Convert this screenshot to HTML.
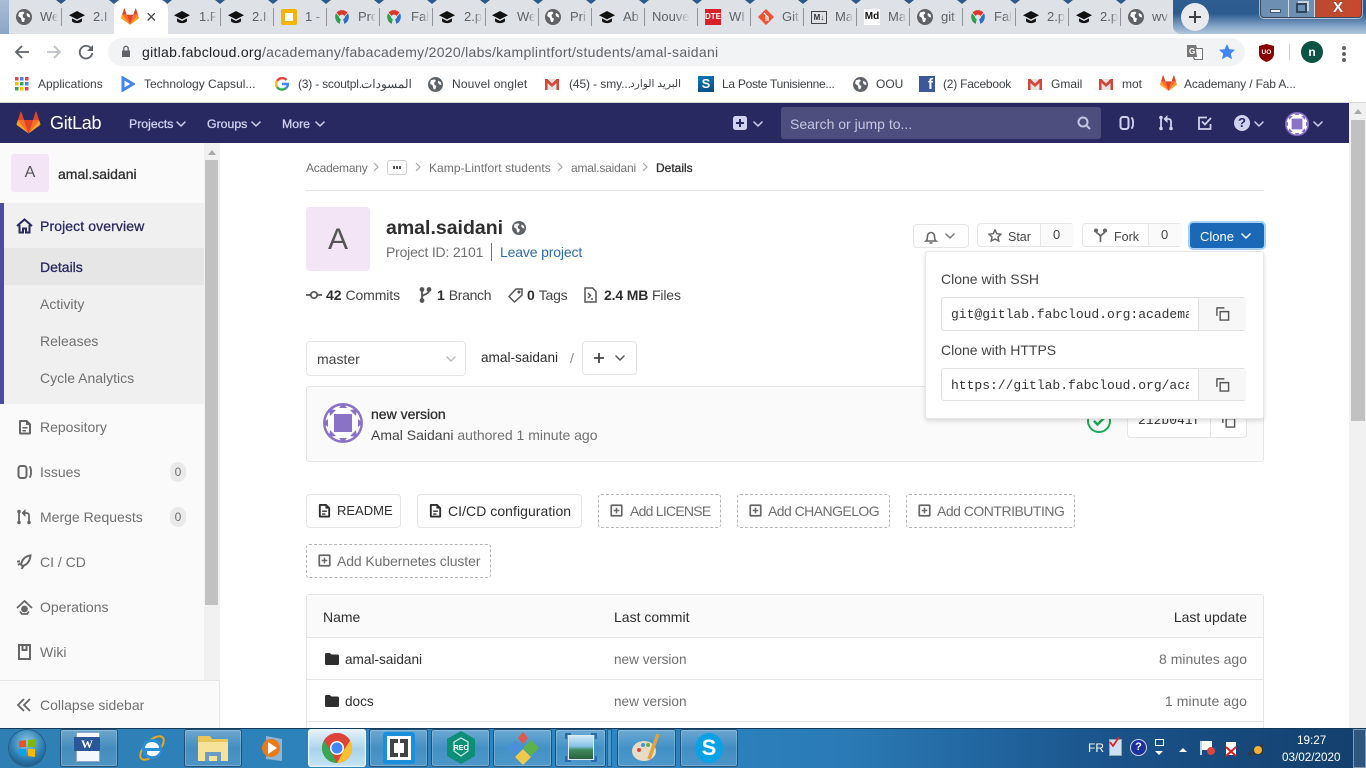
<!DOCTYPE html>
<html lang="en">
<head>
<meta charset="utf-8">
<title>amal.saidani · GitLab</title>
<style>
html,body{margin:0;padding:0;width:1366px;height:768px;overflow:hidden;background:#fff}
body{position:relative;font-family:"Liberation Sans","Noto Sans CJK SC",sans-serif;font-size:14px;color:#2e2e2e}
.a,.t,svg.i{position:absolute}
.t{white-space:nowrap;line-height:20px;height:20px}
.m{-webkit-text-stroke:.3px currentColor}
.box{position:absolute;box-sizing:border-box;background:#fff;border:1px solid #e5e5e5;border-radius:4px}
.dash{border:1px dashed #b5b5b5;border-radius:3px}
.tab{position:absolute;top:7px;height:20px;line-height:20px;font-size:13px;color:#5f6368;white-space:nowrap;overflow:hidden;width:18px;-webkit-mask-image:linear-gradient(90deg,#000 60%,transparent);mask-image:linear-gradient(90deg,#000 60%,transparent)}
.sep{position:absolute;top:8px;width:1px;height:18px;background:#8f9296}
.tri{position:absolute;top:0;width:0;height:0;border-left:5px solid transparent;border-right:5px solid transparent;border-top:4px solid #2c5a8e}
.bm{font-size:12px;color:#3c4043;top:74px}
.nv{font-size:12.3px;color:#d1d1f0;top:114px}
.sb{color:#707070;left:40px}
.mono{font-family:"Liberation Mono",monospace;font-size:13px;color:#2e2e2e}
.tile{position:absolute;top:729px;height:38px;box-sizing:border-box;border:1px solid rgba(10,40,70,.65);border-radius:3px;background:linear-gradient(180deg,rgba(255,255,255,.3),rgba(255,255,255,.1) 50%,rgba(255,255,255,.16));box-shadow:inset 0 0 0 1px rgba(255,255,255,.22)}
</style>
</head>
<body>
<svg width="0" height="0" style="position:absolute">
<defs>
<symbol id="fox" viewBox="0 0 24 24">
<path fill="#e24329" d="M12 22.5 16.4 9H7.6z"/>
<path fill="#fc6d26" d="M12 22.5 7.6 9H1.4zM12 22.5 16.4 9h6.2z"/>
<path fill="#fca326" d="M1.4 9 .1 13.1c-.1.4 0 .8.3 1L12 22.5zM22.6 9l1.3 4.1c.1.4 0 .8-.3 1L12 22.5z"/>
<path fill="#e24329" d="M1.4 9h6.2L4.9.9c-.1-.4-.7-.4-.9 0zM22.6 9h-6.2L19.1.9c.1-.4.7-.4.9 0z"/>
</symbol>
<symbol id="cap" viewBox="0 0 16 16"><path fill="#111" d="M8 2 0 6.2l8 4.200 8-4.200z"/><path fill="#111" d="M3 9.400v2.800c2 2.500 8 2.500 10 0V9.400l-5 2.600z"/></symbol>
<symbol id="globe" viewBox="0 0 16 16"><circle cx="8" cy="8" r="8" fill="#5f6368"/><path fill="#fff" d="M3 3.500 7 2.500 8.500 4 6.500 6 7 8.500 9 9.500 8 13 6 13 5 9 2.200 7zM11 4l2.500 1.500.8 3-2.300-.5-1.500-2z"/></symbol>
<symbol id="fab" viewBox="0 0 16 16"><path fill="#d83a2e" d="M2.500 4A7.500 7.500 0 0 1 13.500 4L10.500 7.500A3 3 0 0 0 5.500 7.500z"/><path fill="#2f9e4f" d="M2 4.800 5 8.300A3 3 0 0 0 6.800 10.800L5.600 15.500A8 8 0 0 1 2 4.800z"/><path fill="#2f6fc0" d="M14 4.800 11 8.300A3 3 0 0 1 9.200 10.800L10.400 15.500A8 8 0 0 0 14 4.800z"/></symbol>
<symbol id="gm" viewBox="0 0 16 16"><path fill="#e4e4e4" d="M1 3h14v11H1z"/><path fill="#d44638" d="M1 3h2.500L8 7.500 12.500 3H15v11h-2.500V7L8 11 3.500 7v7H1z"/></symbol>
<symbol id="chev" viewBox="0 0 10 6"><path fill="none" stroke="currentColor" stroke-width="1.500" stroke-linecap="round" stroke-linejoin="round" d="M1 1l4 4 4-4"/></symbol>
<symbol id="chevr" viewBox="0 0 6 10"><path fill="none" stroke="#a8a8a8" stroke-width="1.200" d="M1 1l4 4-4 4"/></symbol>
<symbol id="issues" viewBox="0 0 16 16"><rect x="1.500" y="2" width="8" height="12" rx="2.500" fill="none" stroke="currentColor" stroke-width="2"/><path fill="none" stroke="currentColor" stroke-width="1.800" stroke-linecap="round" d="M13 3c1.500 2.500 1.500 7.500 0 10"/></symbol>
<symbol id="mr" viewBox="0 0 16 16"><path fill="none" stroke="currentColor" stroke-width="1.800" stroke-linecap="round" d="M3 3v10M13 13V6.500C13 5 12 4 10.500 4H8"/><path fill="currentColor" d="M9.500 0v8L5.500 4z"/><circle cx="3" cy="2.500" r="1.800" fill="currentColor"/><circle cx="3" cy="13.500" r="1.800" fill="currentColor"/><circle cx="13" cy="13.500" r="1.800" fill="currentColor"/></symbol>
<symbol id="doc" viewBox="0 0 16 16"><path fill="currentColor" fill-rule="evenodd" d="M3 1h7l4 4v9a1.500 1.500 0 0 1-1.500 1.500h-9A1.500 1.500 0 0 1 2 14V2a1 1 0 0 1 1-1zm1 2v10.500h8V6H9V3zm1.500 5h5v1.500h-5zm0 3h3.500v1.500H5.500z"/></symbol>
<symbol id="addb" viewBox="0 0 16 16"><path fill="currentColor" fill-rule="evenodd" d="M3 1.500h10A1.500 1.500 0 0 1 14.500 3v10a1.500 1.500 0 0 1-1.500 1.500H3A1.500 1.500 0 0 1 1.500 13V3A1.500 1.500 0 0 1 3 1.500zM3.300 3.300v9.400h9.400V3.300zM7.200 5h1.600v2.200H11v1.600H8.800V11H7.200V8.800H5V7.200h2.200z"/></symbol>
<symbol id="copy" viewBox="0 0 16 16"><path fill="none" stroke="#555" stroke-width="1.500" d="M5.500 6h9v9h-9zM2 10.500V2.200c0-.2 0-.2.200-.2H10"/></symbol>
<symbol id="folder" viewBox="0 0 14 12"><path fill="#2e2e2e" d="M1.500 0h3.200L6.500 1.500h6A1.500 1.500 0 0 1 14 3v7.500A1.500 1.500 0 0 1 12.500 12h-11A1.500 1.500 0 0 1 0 10.500v-9A1.500 1.500 0 0 1 1.500 0z"/></symbol>
<symbol id="ident" viewBox="0 0 40 40"><circle cx="20" cy="20" r="20" fill="#8a72c9"/><circle cx="20" cy="20" r="17.500" fill="#fff"/><path fill="#8a72c9" d="M20 0l4 5h-8zM20 40l4-5h-8zM0 20l5 4v-8zM40 20l-5 4v-8zM6 6l7 1-6 6zM34 6l-7 1 6 6zM6 34l7-1-6-6zM34 34l-7-1 6-6z"/><rect x="11" y="11" width="18" height="18" fill="#8a72c9"/></symbol>
</defs>
</svg>

<!-- window title area -->
<div class="a" style="left:0;top:0;width:1366px;height:34px;background:#dee1e6"></div>
<div class="a" style="left:0;top:0;width:9px;height:34px;background:linear-gradient(180deg,#a9bdd6,#8ba5c7)"></div>
<div class="a" style="left:1173px;top:0;width:193px;height:34px;background:linear-gradient(180deg,#2f5d91 0,#2c5b8f 40%,#7fa0c4 75%,#b2c6dc 100%);border-bottom-left-radius:8px"></div>
<div class="a" style="left:1260px;top:-2px;width:102px;height:20px;box-sizing:border-box;border:1px solid #3a4a5c;border-radius:0 0 4px 4px;box-shadow:0 0 0 1px rgba(255,255,255,.55);background:linear-gradient(90deg,#6d8fb2 0,#6d8fb2 54%,#b94a30 54%,#c8492d 100%);overflow:hidden"></div>
<div class="a" style="left:1288px;top:0;width:1px;height:17px;background:#d0dbe6"></div>
<div class="a" style="left:1314px;top:0;width:1px;height:17px;background:#d0dbe6"></div>
<div class="a" style="left:1270px;top:9px;width:11px;height:4px;background:#eef2f6;border:1px solid #44566a;box-sizing:border-box"></div>
<div class="a" style="left:1296px;top:3px;width:11px;height:10px;border:2px solid #33475c;box-sizing:border-box;box-shadow:2px -2px 0 0 #c9d4df"></div>
<div class="t" style="left:1333px;top:-2px;color:#fff;font-weight:bold;font-size:15px;text-shadow:0 0 1px #333">X</div>

<!-- tab strip -->
<div class="tri" style="left:56px"></div><div class="tri" style="left:109px"></div><div class="tri" style="left:162px"></div><div class="tri" style="left:215px"></div><div class="tri" style="left:268px"></div><div class="tri" style="left:321px"></div><div class="tri" style="left:374px"></div><div class="tri" style="left:427px"></div><div class="tri" style="left:480px"></div><div class="tri" style="left:533px"></div><div class="tri" style="left:586px"></div><div class="tri" style="left:639px"></div><div class="tri" style="left:692px"></div><div class="tri" style="left:745px"></div><div class="tri" style="left:798px"></div><div class="tri" style="left:851px"></div><div class="tri" style="left:904px"></div><div class="tri" style="left:957px"></div><div class="tri" style="left:1010px"></div><div class="tri" style="left:1063px"></div><div class="tri" style="left:1116px"></div>
<div class="sep" style="left:61px"></div><div class="sep" style="left:220px"></div><div class="sep" style="left:273px"></div><div class="sep" style="left:326px"></div><div class="sep" style="left:379px"></div><div class="sep" style="left:432px"></div><div class="sep" style="left:485px"></div><div class="sep" style="left:538px"></div><div class="sep" style="left:591px"></div><div class="sep" style="left:644px"></div><div class="sep" style="left:697px"></div><div class="sep" style="left:750px"></div><div class="sep" style="left:803px"></div><div class="sep" style="left:856px"></div><div class="sep" style="left:909px"></div><div class="sep" style="left:962px"></div><div class="sep" style="left:1015px"></div><div class="sep" style="left:1068px"></div><div class="sep" style="left:1120px"></div>
<div class="a" style="left:114px;top:0;width:54px;height:34px;background:#fff;border-radius:8px 8px 0 0"></div>

<svg class="i" style="left:16px;top:9px" width="16" height="16"><use href="#globe"/></svg><div class="tab" style="left:40px">We</div>
<svg class="i" style="left:69px;top:9px" width="16" height="16"><use href="#cap"/></svg><div class="tab" style="left:93px">2.I</div>
<svg class="i" style="left:121px;top:8px" width="18" height="18"><use href="#fox"/></svg><div class="t" style="left:146px;top:7px;font-size:18px;color:#444">×</div>
<svg class="i" style="left:174px;top:9px" width="16" height="16"><use href="#cap"/></svg><div class="tab" style="left:199px">1.F</div>
<svg class="i" style="left:228px;top:9px" width="16" height="16"><use href="#cap"/></svg><div class="tab" style="left:252px">2.I</div>
<div class="a" style="left:281px;top:9px;width:8px;height:8px;border:4px solid #f4b400;background:#fff;border-radius:2px"></div><div class="tab" style="left:305px">1 -</div>
<svg class="i" style="left:334px;top:8px" width="16" height="17"><use href="#fab"/></svg><div class="tab" style="left:358px">Pro</div>
<svg class="i" style="left:386px;top:8px" width="16" height="17"><use href="#fab"/></svg><div class="tab" style="left:411px">Fal</div>
<svg class="i" style="left:439px;top:9px" width="16" height="16"><use href="#cap"/></svg><div class="tab" style="left:464px">2.p</div>
<svg class="i" style="left:492px;top:9px" width="16" height="16"><use href="#cap"/></svg><div class="tab" style="left:517px">We</div>
<svg class="i" style="left:545px;top:9px" width="16" height="16"><use href="#globe"/></svg><div class="tab" style="left:570px">Pri</div>
<svg class="i" style="left:599px;top:9px" width="16" height="16"><use href="#cap"/></svg><div class="tab" style="left:623px">Ab</div>
<div class="tab" style="left:652px;width:38px">Nouve</div>
<div class="a" style="left:705px;top:9px;width:16px;height:16px;background:#d8202a;color:#fff;font-size:8px;font-weight:bold;line-height:16px;text-align:center">DTE</div><div class="tab" style="left:729px">WI</div>
<svg class="i" style="left:758px;top:9px" width="16" height="16" viewBox="0 0 16 16"><path fill="#f05133" d="M8 0l8 8-8 8-8-8z"/><path stroke="#fff" stroke-width="1.200" fill="none" d="M6 4l4 4v4M8 6v6"/></svg><div class="tab" style="left:782px">Git</div>
<div class="a" style="left:811px;top:11px;width:14px;height:11px;border:1px solid #444;font-size:8px;font-weight:bold;line-height:11px;text-align:center;color:#333;box-sizing:content-box">M↓</div><div class="tab" style="left:835px">Ma</div>
<div class="a" style="left:864px;top:9px;width:16px;height:16px;background:#fff;font-size:10px;font-weight:bold;line-height:16px;text-align:center;color:#111">Md</div><div class="tab" style="left:888px">Ma</div>
<svg class="i" style="left:917px;top:9px" width="16" height="16"><use href="#globe"/></svg><div class="tab" style="left:941px">git</div>
<svg class="i" style="left:970px;top:8px" width="16" height="17"><use href="#fab"/></svg><div class="tab" style="left:994px">Fal</div>
<svg class="i" style="left:1023px;top:9px" width="16" height="16"><use href="#cap"/></svg><div class="tab" style="left:1047px">2.p</div>
<svg class="i" style="left:1076px;top:9px" width="16" height="16"><use href="#cap"/></svg><div class="tab" style="left:1100px">2.p</div>
<svg class="i" style="left:1128px;top:9px" width="16" height="16"><use href="#globe"/></svg><div class="tab" style="left:1152px">wv</div>
<div class="a" style="left:1181px;top:3px;width:28px;height:28px;border-radius:50%;background:#e8eaed"></div>
<svg class="i" style="left:1188px;top:10px" width="14" height="14"><path d="M7 1v12M1 7h12" stroke="#3c4043" stroke-width="2"/></svg>

<!-- toolbar -->
<div class="a" style="left:0;top:34px;width:1366px;height:68px;background:#fff"></div>
<svg class="i" style="left:14px;top:44px" width="16" height="16" fill="none" stroke="#5f6368" stroke-width="1.800"><path d="M15 8H2M8 2 2 8l6 6"/></svg>
<svg class="i" style="left:46px;top:44px" width="16" height="16" fill="none" stroke="#bdc1c6" stroke-width="1.800"><path d="M1 8h13M8 2l6 6-6 6"/></svg>
<svg class="i" style="left:78px;top:44px" width="16" height="16" fill="none" stroke="#5f6368" stroke-width="1.800"><path d="M13.500 5A6.300 6.300 0 1 0 14.300 9"/><path fill="#5f6368" stroke="none" d="M15 1v6H9z"/></svg>
<div class="a" style="left:108px;top:38px;width:1137px;height:28px;border-radius:14px;background:#f1f3f4"></div>
<svg class="i" style="left:121px;top:45px" width="10" height="13" fill="#5f6368"><path d="M1 5.500h8V12H1z"/><path fill="none" stroke="#5f6368" stroke-width="1.300" d="M2.800 5.500V3.500a2.200 2.200 0 0 1 4.400 0v2"/></svg>
<div class="t" style="left:142px;top:42px;font-size:14px;letter-spacing:.29px;color:#5f6368"><span style="color:#202124">gitlab.fabcloud.org</span>/academany/fabacademy/2020/labs/kamplintfort/students/amal-saidani</div>
<svg class="i" style="left:1187px;top:44px" width="17" height="17"><path fill="#777" d="M0 1h9l1 3h6v12H7l-1-3H0z"/><path fill="#fff" d="M9 5h6v10H8l-1-2h3z"/><text x="2" y="10" font-size="8" fill="#fff" font-family="Liberation Sans" font-weight="bold">G</text></svg>
<svg class="i" style="left:1219px;top:44px" width="16" height="16"><path fill="#4285f4" d="M8 0l2.400 5.200 5.600.6-4.200 3.800 1.200 5.600L8 12.400 3 15.200l1.200-5.600L0 5.800l5.600-.6z"/></svg>
<svg class="i" style="left:1259px;top:44px" width="15" height="18"><path fill="#800" d="M0 2l7.500-2L15 2v8c0 4-3.500 6.500-7.500 8C3.500 16.500 0 14 0 10z"/><text x="2.500" y="10" font-size="6.500" fill="#fff" font-family="Liberation Sans" font-weight="bold">UO</text></svg>
<div class="a" style="left:1289px;top:44px;width:1px;height:16px;background:#d0d0d0"></div>
<div class="a" style="left:1301px;top:41px;width:22px;height:22px;border-radius:50%;background:#0b5345;color:#fff;font-size:12px;font-weight:bold;line-height:22px;text-align:center">n</div>
<div class="a" style="left:1342px;top:46px;width:4px;height:4px;border-radius:50%;background:#5f6368;box-shadow:0 6px 0 #5f6368,0 12px 0 #5f6368"></div>

<!-- bookmarks -->
<svg class="i" style="left:15px;top:77px" width="14" height="14"><g><rect x="0" y="0" width="3.500" height="3.500" fill="#ea4335"/><rect x="5" y="0" width="3.500" height="3.500" fill="#4285f4"/><rect x="10" y="0" width="3.500" height="3.500" fill="#ea4335"/><rect x="0" y="5" width="3.500" height="3.500" fill="#fbbc05"/><rect x="5" y="5" width="3.500" height="3.500" fill="#34a853"/><rect x="10" y="5" width="3.500" height="3.500" fill="#4285f4"/><rect x="0" y="10" width="3.500" height="3.500" fill="#34a853"/><rect x="5" y="10" width="3.500" height="3.500" fill="#fbbc05"/><rect x="10" y="10" width="3.500" height="3.500" fill="#ea4335"/></g></svg>
<div class="t bm" style="left:38px">Applications</div>
<svg class="i" style="left:121px;top:76px" width="14" height="16"><path fill="none" stroke="#4285f4" stroke-width="3" d="M2 2l10 6-10 6z"/></svg>
<div class="t bm" style="left:144px">Technology Capsul...</div>
<svg class="i" style="left:275px;top:77px" width="14" height="14" viewBox="0 0 14 14" fill="none" stroke-width="2.400"><path stroke="#ea4335" d="M11.500 3A6 6 0 0 0 2 4"/><path stroke="#fbbc05" d="M2 4a6 6 0 0 0 0 6"/><path stroke="#34a853" d="M2 10a6 6 0 0 0 9 1"/><path stroke="#4285f4" d="M11 11.200A6 6 0 0 0 13 7H7"/></svg>
<div class="t bm" style="left:298px;letter-spacing:-.2px">(3) - scoutpl...</div><div class="t bm" style="left:361px;font-size:12px">المسودات</div>
<svg class="i" style="left:428px;top:77px" width="15" height="15"><use href="#globe"/></svg>
<div class="t bm" style="left:452px;letter-spacing:.15px">Nouvel onglet</div>
<svg class="i" style="left:544px;top:76px" width="16" height="16"><use href="#gm"/></svg>
<div class="t bm" style="left:569px;letter-spacing:-.1px">(45) - smy...</div><div class="t bm" style="left:630px;font-size:10.600px">البريد الوارد</div>
<div class="a" style="left:698px;top:76px;width:16px;height:16px;background:linear-gradient(160deg,#0a7ab8,#084a7c);color:#fff;font-weight:bold;font-size:13px;line-height:16px;text-align:center">S</div>
<div class="t bm" style="left:722px;letter-spacing:-.28px">La Poste Tunisienne...</div>
<svg class="i" style="left:853px;top:77px" width="15" height="15"><use href="#globe"/></svg>
<div class="t bm" style="left:876px">OOU</div>
<div class="a" style="left:919px;top:76px;width:16px;height:16px;background:#3b5998;color:#fff;font-weight:bold;font-size:15px;line-height:18px;text-align:right;overflow:hidden"><span style="margin-right:2px">f</span></div>
<div class="t bm" style="left:943px;letter-spacing:-.22px">(2) Facebook</div>
<svg class="i" style="left:1027px;top:76px" width="16" height="16"><use href="#gm"/></svg>
<div class="t bm" style="left:1051px">Gmail</div>
<svg class="i" style="left:1098px;top:76px" width="16" height="16"><use href="#gm"/></svg>
<div class="t bm" style="left:1122px">mot</div>
<svg class="i" style="left:1160px;top:75px" width="17" height="17"><use href="#fox"/></svg>
<div class="t bm" style="left:1184px;letter-spacing:-.15px">Academany / Fab A...</div>
<div class="a" style="left:0;top:102px;width:1366px;height:1px;background:#d8d8d8"></div>

<!-- GitLab nav -->
<div class="a" style="left:0;top:103px;width:1349px;height:40px;background:#292961"></div>
<svg class="i" style="left:16px;top:111px" width="25" height="24"><use href="#fox"/></svg>
<div class="t" style="left:50px;top:113px;font-size:18px;color:#fff;letter-spacing:-.3px">GitLab</div>
<div class="t nv m" style="left:129px">Projects</div><svg class="i" style="left:176px;top:121px;color:#d1d1f0" width="10" height="6"><use href="#chev"/></svg>
<div class="t nv m" style="left:207px">Groups</div><svg class="i" style="left:251px;top:121px;color:#d1d1f0" width="10" height="6"><use href="#chev"/></svg>
<div class="t nv m" style="left:282px">More</div><svg class="i" style="left:315px;top:121px;color:#d1d1f0" width="10" height="6"><use href="#chev"/></svg>
<svg class="i" style="left:733px;top:116px" width="14" height="14"><path fill="#d1d1f0" fill-rule="evenodd" d="M2.500 0h9A2.500 2.500 0 0 1 14 2.500v9a2.500 2.500 0 0 1-2.500 2.500h-9A2.500 2.500 0 0 1 0 11.500v-9A2.500 2.500 0 0 1 2.500 0zM6 3v3H3v2h3v3h2V8h3V6H8V3z"/></svg>
<svg class="i" style="left:753px;top:121px;color:#d1d1f0" width="10" height="6"><use href="#chev"/></svg>
<div class="a" style="left:781px;top:107px;width:320px;height:32px;border-radius:3px;background:#4e4e7e"></div>
<div class="t" style="left:790px;top:114px;font-size:14px;color:#c6c6e2">Search or jump to...</div>
<svg class="i" style="left:1077px;top:116px" width="14" height="14" fill="none" stroke="#c6c6e2" stroke-width="2"><circle cx="6" cy="6" r="4.500"/><path d="M9.500 9.500 13 13"/></svg>
<svg class="i" style="left:1119px;top:115px;color:#d1d1f0" width="16" height="16"><use href="#issues"/></svg>
<svg class="i" style="left:1158px;top:115px;color:#d1d1f0" width="16" height="16"><use href="#mr"/></svg>
<svg class="i" style="left:1198px;top:116px" width="14" height="14" fill="none" stroke="#d1d1f0" stroke-width="1.800"><path d="M12.500 8v5H1V1.500h8"/><path d="M4.500 6l2.500 2.500L12.500 2.500" stroke-linecap="round"/></svg>
<div class="a" style="left:1234px;top:115px;width:16px;height:16px;border-radius:50%;background:#d1d1f0;color:#292961;font-weight:bold;font-size:13px;line-height:16px;text-align:center">?</div>
<svg class="i" style="left:1254px;top:121px;color:#d1d1f0" width="10" height="6"><use href="#chev"/></svg>
<svg class="i" style="left:1285px;top:112px" width="24" height="24"><use href="#ident"/></svg>
<svg class="i" style="left:1313px;top:121px;color:#d1d1f0" width="10" height="6"><use href="#chev"/></svg>

<!-- page scrollbar -->
<div class="a" style="left:1349px;top:103px;width:17px;height:625px;background:#f1f1f1"></div>
<div class="a" style="left:1351px;top:120px;width:14px;height:301px;background:#c1c1c1"></div>
<div class="a" style="left:1354px;top:109px;width:0;height:0;border-left:4px solid transparent;border-right:4px solid transparent;border-bottom:5px solid #a8a8a8"></div>

<!-- sidebar -->
<div class="a" style="left:0;top:143px;width:204px;height:585px;background:#fafafa"></div>
<div class="a" style="left:204px;top:143px;width:16px;height:538px;background:#f1f1f1"></div>
<div class="a" style="left:205px;top:160px;width:13px;height:445px;background:#c1c1c1"></div>
<div class="a" style="left:208px;top:150px;width:0;height:0;border-left:4px solid transparent;border-right:4px solid transparent;border-bottom:5px solid #a8a8a8"></div>
<div class="a" style="left:11px;top:154px;width:38px;height:38px;border-radius:3px;background:#f3e5f5;color:#555;font-size:16px;line-height:38px;text-align:center">A</div>
<div class="t m" style="left:58px;top:164px;color:#2e2e2e;font-size:14px">amal.saidani</div>
<div class="a" style="left:0;top:203px;width:204px;height:201px;background:#f0f0f0"></div>
<div class="a" style="left:0;top:203px;width:4px;height:201px;background:#4b4ba3"></div>
<div class="a" style="left:4px;top:248px;width:200px;height:37px;background:#e6e6e6"></div>
<svg class="i" style="left:16px;top:218px" width="17" height="16"><path fill="none" stroke="#292961" stroke-width="2" d="M1 8 8.500 1.500 16 8M3.500 7v7.500h3.500v-4h3v4h3.500V7"/></svg>
<div class="t m" style="left:40px;top:216px;color:#292961;letter-spacing:.1px">Project overview</div>
<div class="t m" style="left:40px;top:257px;color:#292961">Details</div>
<div class="t" style="left:40px;top:294px;color:#707070">Activity</div>
<div class="t" style="left:40px;top:331px;color:#707070">Releases</div>
<div class="t" style="left:40px;top:368px;color:#707070">Cycle Analytics</div>
<svg class="i" style="left:17px;top:419px;color:#666" width="16" height="16"><use href="#doc"/></svg>
<div class="t sb" style="top:417px">Repository</div>
<svg class="i" style="left:17px;top:464px;color:#666" width="16" height="16"><use href="#issues"/></svg>
<div class="t sb" style="top:462px">Issues</div>
<div class="a" style="left:170px;top:462px;width:16px;height:20px;border-radius:10px;background:#eaeaea;color:#707070;font-size:12px;line-height:20px;text-align:center">0</div>
<svg class="i" style="left:16px;top:509px;color:#666" width="16" height="16"><use href="#mr"/></svg>
<div class="t sb" style="top:507px">Merge Requests</div>
<div class="a" style="left:170px;top:507px;width:16px;height:20px;border-radius:10px;background:#eaeaea;color:#707070;font-size:12px;line-height:20px;text-align:center">0</div>
<svg class="i" style="left:16px;top:554px" width="16" height="16" fill="none" stroke="#666" stroke-width="2"><path d="M14.500 1.500C9 2 6 6 5 10.500l1.500 1.500C11 11 14 7 14.500 1.500zM1 7.500h3M5.500 15l2-3M2 11l2-1.500"/></svg>
<div class="t sb" style="top:552px">CI / CD</div>
<svg class="i" style="left:16px;top:599px" width="17" height="16" fill="none" stroke="#666" stroke-width="1.800"><path d="M1 9 8.500 2 16 9"/><circle cx="8.500" cy="10" r="2.500" fill="#666"/><path d="M4 12.500 6 15h5l2-2.500"/></svg>
<div class="t sb" style="top:597px">Operations</div>
<svg class="i" style="left:18px;top:644px" width="13" height="16" fill="none" stroke="#666" stroke-width="2"><path d="M1 1h11v14H1zM4.500 1v5h4V1"/></svg>
<div class="t sb" style="top:642px">Wiki</div>
<div class="a" style="left:0;top:680px;width:219px;height:1px;background:#e5e5e5"></div>
<div class="a" style="left:0;top:681px;width:219px;height:47px;background:#fafafa"></div>
<div class="a" style="left:219px;top:681px;width:1px;height:47px;background:#e5e5e5"></div>
<svg class="i" style="left:17px;top:698px" width="14" height="14" fill="none" stroke="#666" stroke-width="1.800"><path d="M7 1 1 7l6 6M13 1 7 7l6 6"/></svg>
<div class="t sb" style="top:695px">Collapse sidebar</div>

<!-- breadcrumb -->
<div class="t" style="left:306px;top:158px;font-size:12px;color:#707070;letter-spacing:-.2px">Academany</div>
<svg class="i" style="left:373px;top:162px" width="6" height="10"><use href="#chevr"/></svg>
<div class="box" style="left:387px;top:160px;width:20px;height:15px;border-color:#d0d0d0;border-radius:3px"></div>
<div class="a" style="left:393px;top:166px;width:2px;height:3px;background:#555;box-shadow:3px 0 0 #555,6px 0 0 #555"></div>
<svg class="i" style="left:415px;top:162px" width="6" height="10"><use href="#chevr"/></svg>
<div class="t" style="left:429px;top:158px;font-size:12px;color:#707070;letter-spacing:.05px">Kamp-Lintfort students</div>
<svg class="i" style="left:557px;top:162px" width="6" height="10"><use href="#chevr"/></svg>
<div class="t" style="left:571px;top:158px;font-size:12px;color:#707070;letter-spacing:-.2px">amal.saidani</div>
<svg class="i" style="left:642px;top:162px" width="6" height="10"><use href="#chevr"/></svg>
<div class="t m" style="left:656px;top:158px;font-size:12px;color:#2e2e2e">Details</div>
<div class="a" style="left:306px;top:190px;width:958px;height:1px;background:#e5e5e5"></div>

<!-- project head -->
<div class="a" style="left:306px;top:207px;width:64px;height:64px;border-radius:4px;background:#f3e5f5;color:#555;font-size:30px;line-height:66px;text-align:center">A</div>
<div class="t" style="left:386px;top:218px;font-size:19.500px;font-weight:bold;color:#2e2e2e">amal.saidani</div>
<svg class="i" style="left:512px;top:221px" width="14" height="14"><use href="#globe"/></svg>
<div class="t" style="left:386px;top:242px;color:#707070;letter-spacing:-.2px">Project ID: 2101</div>
<div class="a" style="left:491px;top:243px;width:1px;height:18px;background:#707070"></div>
<div class="t" style="left:500px;top:242px;color:#2b6cb0;letter-spacing:-.15px">Leave project</div>

<!-- stats -->
<svg class="i" style="left:306px;top:288px" width="16" height="14" fill="none" stroke="#555" stroke-width="1.700"><circle cx="8" cy="7" r="3.200"/><path d="M0 7h4.800M11.200 7H16"/></svg>
<div class="t" style="left:326px;top:285px;color:#2e2e2e"><b>42</b> <span style="color:#444;letter-spacing:-.1px">Commits</span></div>
<svg class="i" style="left:419px;top:287px" width="13" height="16" fill="none" stroke="#555" stroke-width="1.800"><path d="M3 2v12M3 10c0-3 7-2 7-7"/><circle cx="3" cy="2.500" r="1.500" fill="#555"/><circle cx="3" cy="13.500" r="1.500" fill="#555"/><circle cx="10" cy="2.500" r="1.500" fill="#555"/></svg>
<div class="t" style="left:437px;top:285px;color:#2e2e2e"><b>1</b> <span style="color:#444;letter-spacing:-.3px">Branch</span></div>
<svg class="i" style="left:508px;top:288px" width="15" height="15" fill="none" stroke="#555" stroke-width="1.500"><path d="M8 1h6v6l-7.500 7L1 8.500z"/><circle cx="11" cy="4" r=".8" fill="#555"/></svg>
<div class="t" style="left:527px;top:285px;color:#2e2e2e"><b>0</b> <span style="color:#444;letter-spacing:-.2px">Tags</span></div>
<svg class="i" style="left:584px;top:287px" width="13" height="16" fill="none" stroke="#555" stroke-width="1.500"><path d="M1 1h7.500L12 4.500V15H1z"/><path d="M4 6l2.500 2.500L4 11M7 12h2"/></svg>
<div class="t" style="left:604px;top:285px;color:#2e2e2e;letter-spacing:-.15px"><b>2.4 MB</b> <span style="color:#444">Files</span></div>

<!-- action buttons -->
<div class="box" style="left:913px;top:224px;width:56px;height:24px"></div>
<svg class="i" style="left:924px;top:230px" width="14" height="14" fill="none" stroke="#666" stroke-width="1.600"><path d="M2 11c1.500-1 1.500-3 1.500-5a3.500 3.500 0 0 1 7 0c0 2 0 4 1.500 5zM5.500 13h3"/></svg>
<svg class="i" style="left:945px;top:233px;color:#777" width="10" height="6"><use href="#chev"/></svg>
<div class="box" style="left:977px;top:223px;width:97px;height:24px"></div>
<div class="a" style="left:1040px;top:224px;width:33px;height:22px;background:#fafafa;border-left:1px solid #e5e5e5"></div>
<svg class="i" style="left:988px;top:229px" width="14" height="13" fill="none" stroke="#666" stroke-width="1.500"><path d="M7 1l1.800 3.700 4.200.5-3 2.800.8 4L7 10l-3.800 2 .8-4-3-2.800 4.200-.5z"/></svg>
<div class="t" style="left:1008px;top:227px;font-size:12.500px;color:#444">Star</div>
<div class="t" style="left:1053px;top:225px;font-size:13px;color:#444">0</div>
<div class="box" style="left:1082px;top:223px;width:100px;height:24px"></div>
<div class="a" style="left:1148px;top:224px;width:33px;height:22px;background:#fafafa;border-left:1px solid #e5e5e5"></div>
<svg class="i" style="left:1094px;top:228px" width="13" height="15" fill="none" stroke="#666" stroke-width="1.700"><path d="M6.500 9v5M2 2.500c0 4 4.500 3 4.500 6.500 0-3.500 4.500-2.500 4.500-6.500"/><circle cx="2" cy="2.500" r="1.200" fill="#666"/><circle cx="11" cy="2.500" r="1.200" fill="#666"/></svg>
<div class="t" style="left:1114px;top:227px;font-size:12.500px;color:#444">Fork</div>
<div class="t" style="left:1161px;top:225px;font-size:13px;color:#444">0</div>
<div class="a" style="left:1190px;top:223px;width:74px;height:25px;border-radius:3px;background:#1b69b6;box-shadow:0 0 0 2px #a7d0f6"></div>
<div class="t" style="left:1200px;top:227px;font-size:13px;color:#fff">Clone</div>
<svg class="i" style="left:1241px;top:233px;color:#fff" width="10" height="6"><use href="#chev"/></svg>

<!-- repo controls -->
<div class="box" style="left:306px;top:341px;width:160px;height:35px"></div>
<div class="t" style="left:317px;top:349px;color:#444">master</div>
<svg class="i" style="left:446px;top:356px;color:#bbb" width="10" height="6"><use href="#chev"/></svg>
<div class="t" style="left:481px;top:348px;color:#2e2e2e;font-size:13.600px">amal-saidani</div>
<div class="t" style="left:570px;top:348px;color:#888">/</div>
<div class="box" style="left:582px;top:341px;width:55px;height:34px"></div>
<svg class="i" style="left:594px;top:353px" width="10" height="10"><path d="M5 0v10M0 5h10" stroke="#444" stroke-width="1.800"/></svg>
<svg class="i" style="left:615px;top:355px;color:#555" width="10" height="6"><use href="#chev"/></svg>

<!-- commit box -->
<div class="box" style="left:306px;top:386px;width:958px;height:76px;background:#fafafa;border-radius:3px"></div>
<svg class="i" style="left:323px;top:403px" width="40" height="40"><use href="#ident"/></svg>
<div class="t m" style="left:371px;top:404px;color:#2e2e2e;font-size:14px">new version</div>
<div class="t" style="left:371px;top:425px;color:#444">Amal Saidani <span style="color:#707070">authored 1 minute ago</span></div>
<svg class="i" style="left:1087px;top:409px" width="24" height="24" fill="none" stroke="#1aaa55" stroke-width="2"><circle cx="12" cy="12" r="11"/><path d="M7 12l3.500 3.500L17 9" stroke-width="2.500"/></svg>
<div class="box" style="left:1127px;top:405px;width:120px;height:33px"></div>
<div class="a" style="left:1210px;top:405px;width:1px;height:33px;background:#e5e5e5"></div>
<div class="t mono" style="left:1138px;top:411px">212b041f</div>
<svg class="i" style="left:1221px;top:413px" width="15" height="15"><use href="#copy"/></svg>

<!-- clone popover -->
<div class="a" style="left:925px;top:251px;width:339px;height:168px;background:#fff;border:1px solid #e8e8e8;box-sizing:border-box;border-radius:3px;box-shadow:0 2px 4px rgba(0,0,0,.14)"></div>
<div class="t" style="left:941px;top:269px;color:#444;font-size:14px">Clone with SSH</div>
<div class="box" style="left:941px;top:297px;width:305px;height:34px;border-radius:3px;border-color:#e0e0e0"></div>
<div class="a" style="left:1198px;top:298px;width:47px;height:32px;background:#f7f7f7;border-left:1px solid #e0e0e0"></div>
<div class="t mono" style="left:951px;top:305px;width:238px;overflow:hidden;color:#333">git@gitlab.fabcloud.org:academany/fabacademy</div>
<svg class="i" style="left:1215px;top:306px" width="15" height="15"><use href="#copy"/></svg>
<div class="t" style="left:941px;top:340px;color:#444;font-size:14px">Clone with HTTPS</div>
<div class="box" style="left:941px;top:368px;width:305px;height:33px;border-radius:3px;border-color:#e0e0e0"></div>
<div class="a" style="left:1198px;top:369px;width:47px;height:31px;background:#f7f7f7;border-left:1px solid #e0e0e0"></div>
<div class="t mono" style="left:951px;top:376px;width:238px;overflow:hidden;color:#333">https://gitlab.fabcloud.org/academany</div>
<svg class="i" style="left:1215px;top:377px" width="15" height="15"><use href="#copy"/></svg>

<!-- quick action buttons -->
<div class="box" style="left:306px;top:494px;width:95px;height:34px"></div>
<svg class="i" style="left:317px;top:503px;color:#2e2e2e" width="15" height="15"><use href="#doc"/></svg>
<div class="t" style="left:337px;top:501px;color:#2e2e2e;font-size:13px">README</div>
<div class="box" style="left:417px;top:494px;width:165px;height:34px"></div>
<svg class="i" style="left:428px;top:503px;color:#2e2e2e" width="15" height="15"><use href="#doc"/></svg>
<div class="t" style="left:448px;top:501px;color:#2e2e2e;letter-spacing:.05px">CI/CD configuration</div>
<div class="a dash" style="left:598px;top:494px;width:123px;height:34px;box-sizing:border-box"></div>
<svg class="i" style="left:609px;top:503px;color:#666" width="15" height="15"><use href="#addb"/></svg>
<div class="t" style="left:630px;top:501px;color:#707070;letter-spacing:-.75px">Add LICENSE</div>
<div class="a dash" style="left:737px;top:494px;width:153px;height:34px;box-sizing:border-box"></div>
<svg class="i" style="left:748px;top:503px;color:#666" width="15" height="15"><use href="#addb"/></svg>
<div class="t" style="left:768px;top:501px;color:#707070;letter-spacing:-.55px">Add CHANGELOG</div>
<div class="a dash" style="left:906px;top:494px;width:169px;height:34px;box-sizing:border-box"></div>
<svg class="i" style="left:917px;top:503px;color:#666" width="15" height="15"><use href="#addb"/></svg>
<div class="t" style="left:937px;top:501px;color:#707070;letter-spacing:-.5px">Add CONTRIBUTING</div>
<div class="a dash" style="left:306px;top:544px;width:185px;height:34px;box-sizing:border-box"></div>
<svg class="i" style="left:317px;top:553px;color:#666" width="15" height="15"><use href="#addb"/></svg>
<div class="t" style="left:337px;top:551px;color:#707070;letter-spacing:-.1px">Add Kubernetes cluster</div>

<!-- file table -->
<div class="a" style="left:306px;top:594px;width:958px;height:140px;box-sizing:border-box;border:1px solid #e5e5e5;border-radius:3px 3px 0 0"></div>
<div class="a" style="left:307px;top:595px;width:956px;height:42px;background:#fafafa"></div>
<div class="a" style="left:307px;top:637px;width:956px;height:1px;background:#e5e5e5"></div>
<div class="a" style="left:307px;top:679px;width:956px;height:1px;background:#e5e5e5"></div>
<div class="a" style="left:307px;top:721px;width:956px;height:1px;background:#e5e5e5"></div>
<div class="t" style="left:323px;top:607px;color:#2e2e2e">Name</div>
<div class="t" style="left:614px;top:607px;color:#2e2e2e">Last commit</div>
<div class="t" style="right:119px;top:607px;color:#2e2e2e">Last update</div>
<svg class="i" style="left:325px;top:653px" width="14" height="12"><use href="#folder"/></svg>
<div class="t" style="left:345px;top:650px;color:#2e2e2e;font-size:13.600px">amal-saidani</div>
<div class="t" style="left:614px;top:650px;color:#707070;font-size:13.600px">new version</div>
<div class="t" style="right:119px;top:649px;color:#707070;font-size:14px">8 minutes ago</div>
<svg class="i" style="left:325px;top:695px" width="14" height="12"><use href="#folder"/></svg>
<div class="t" style="left:345px;top:692px;color:#2e2e2e;font-size:13.600px">docs</div>
<div class="t" style="left:614px;top:692px;color:#707070;font-size:13.600px">new version</div>
<div class="t" style="right:119px;top:691px;color:#707070;font-size:14px;letter-spacing:.1px">1 minute ago</div>

<!-- taskbar -->
<div class="a" style="left:0;top:728px;width:1366px;height:40px;background:linear-gradient(90deg,#2f7fb4 0,#2d86c2 45%,#2a7ab6 62%,#1a5289 82%,#133f6c 100%);border-top:1px solid #123a5c;box-sizing:border-box"></div>
<div class="a" style="left:9px;top:730px;width:36px;height:36px;border-radius:50%;background:radial-gradient(circle at 50% 35%,#8ecbe9,#2c7fb3 55%,#173f66);box-shadow:0 0 0 1px #2a5a80"></div>
<svg class="i" style="left:18px;top:739px" width="18" height="18"><path fill="#f25022" d="M1 2l7-1v7H1z"/><path fill="#7fba00" d="M10 1l7-1v8h-7z"/><path fill="#00a4ef" d="M1 10h7v7l-7-1z"/><path fill="#ffb900" d="M10 10h7v8l-7-1z"/></svg>

<div class="tile" style="left:60px;width:58px"></div>
<div class="a" style="left:76px;top:732px;width:24px;height:30px;background:#f4f7fb;border:1px solid #8fa6c8;box-sizing:border-box"></div>
<div class="a" style="left:74px;top:737px;width:26px;height:14px;background:#2b579a;color:#fff;font-weight:bold;font-size:12px;line-height:14px;text-align:center;font-family:'Liberation Serif',serif">W</div>
<svg class="i" style="left:136px;top:732px" width="32" height="32" viewBox="0 0 32 32"><ellipse cx="16" cy="16" rx="15" ry="7" transform="rotate(-45 16 16)" fill="none" stroke="#e6a81e" stroke-width="2"/><circle cx="16" cy="17" r="10" fill="#2a8fd8"/><path fill="#fff" d="M9 16a7 6 0 0 1 14 0zM11 19h13a8 8 0 0 1-13 3z"/><path d="M11 18h13" stroke="#2a8fd8" stroke-width="2"/></svg>
<div class="tile" style="left:184px;width:58px"></div>
<svg class="i" style="left:196px;top:733px" width="34" height="30" viewBox="0 0 34 30"><path fill="#e9c65a" d="M2 3h12l2 3h16v22H2z"/><path fill="#f7e29a" d="M2 9h30v19H2z"/><path fill="#6f9cc4" d="M9 19h16v9h-4v-5h-8v5H9z"/></svg>
<svg class="i" style="left:258px;top:733px" width="28" height="30" viewBox="0 0 28 30"><path fill="#8fb4d6" d="M8 3l16 3v22L8 26z"/><circle cx="13" cy="15" r="9" fill="#ea7a18"/><path fill="#fff" d="M10 9l9 6-9 6z"/></svg>
<div class="tile" style="left:308px;width:58px;background:linear-gradient(180deg,#e4f2fa,#a9d2ea 55%,#c4e2f2);border-color:#e8f4fb"></div>
<svg class="i" style="left:322px;top:733px" width="30" height="30" viewBox="0 0 30 30"><circle cx="15" cy="15" r="15" fill="#db4437"/><path fill="#34a853" d="M15 30A15 15 0 0 1 2 7.500L9 19z"/><path fill="#fbc02d" d="M28 7.500A15 15 0 0 1 15 30L22 17z"/><path fill="#db4437" d="M2 7.500A15 15 0 0 1 28 7.500H15z"/><circle cx="15" cy="15" r="7" fill="#fff"/><circle cx="15" cy="15" r="5.500" fill="#4285f4"/></svg>
<div class="tile" style="left:369px;width:59px"></div>
<div class="a" style="left:383px;top:732px;width:32px;height:32px;background:#1a8fdc;border-radius:3px"></div>
<div class="a" style="left:387px;top:736px;width:24px;height:24px;background:#fff"></div>
<div class="a" style="left:390px;top:739px;width:18px;height:18px;background:#444"></div>
<div class="a" style="left:394px;top:743px;width:10px;height:10px;background:#fff"></div>
<div class="a" style="left:398px;top:739px;width:2px;height:4px;background:#fff"></div>
<div class="a" style="left:398px;top:753px;width:2px;height:4px;background:#fff"></div>
<div class="tile" style="left:431px;width:59px"></div>
<svg class="i" style="left:447px;top:731px" width="28" height="33" viewBox="0 0 28 33"><path fill="#0d8f77" d="M14 0l14 8v17l-14 8-14-8V8z"/><path fill="none" stroke="#cdeee6" stroke-width="1.200" d="M7 11l7-4 7 4v9l-7 5-7-5z"/><text x="14" y="19" font-size="7" font-weight="bold" text-anchor="middle" fill="#fff" font-family="Liberation Sans">REC</text></svg>
<div class="tile" style="left:493px;width:59px"></div>
<svg class="i" style="left:507px;top:731px" width="32" height="34" viewBox="0 0 32 34"><path fill="#e2574c" d="M11 7l5-6 5 6-5 6z"/><path fill="#4a90d9" d="M0 17l8-8 8 8-8 8z"/><path fill="#5fb24a" d="M16 17l8-8 8 8-8 8z"/><path fill="#efc94c" d="M8 26l8-8 8 8-8 8z"/></svg>
<div class="tile" style="left:555px;width:51px"></div>
<div class="a" style="left:568px;top:735px;width:26px;height:25px;background:linear-gradient(180deg,#cfe8f6 0,#86c1e6 45%,#3f8a5a 60%,#2c5f3f 100%);border:1px solid #dfeaf2;box-sizing:border-box"></div>
<svg class="i" style="left:565px;top:733px" width="32" height="29" fill="none" stroke="#2a6aa8" stroke-width="2"><path d="M1 6V1h5M26 1h5v5M1 23v5h5M26 28h5v-5"/></svg>
<div class="a" style="left:607px;top:729px;width:5px;height:38px;border:1px solid rgba(10,40,70,.5);box-sizing:border-box;background:rgba(255,255,255,.15)"></div>
<div class="tile" style="left:617px;width:59px"></div>
<svg class="i" style="left:632px;top:732px" width="30" height="32" viewBox="0 0 30 32"><ellipse cx="12" cy="19" rx="12" ry="10" fill="#e7dcc6"/><circle cx="7" cy="18" r="2" fill="#d9463b"/><circle cx="11" cy="13" r="2" fill="#4a90d9"/><circle cx="16" cy="13" r="2" fill="#5fb24a"/><path d="M26 2 17 27" stroke="#e0a23c" stroke-width="3.500"/></svg>
<div class="tile" style="left:680px;width:58px"></div>
<div class="a" style="left:695px;top:733px;width:28px;height:30px;border-radius:50%;background:#0aa2e4;color:#fff;font-size:22px;font-weight:bold;line-height:30px;text-align:center">S</div>

<!-- tray -->
<div class="t" style="left:1088px;top:738px;font-size:12px;color:#fff">FR</div>
<div class="a" style="left:1109px;top:739px;width:11px;height:15px;background:#cfe0f2;border:1px solid #8aa"></div>
<svg class="i" style="left:1109px;top:736px" width="12" height="12"><path d="M1 6l3 4 6-9" fill="none" stroke="#e02020" stroke-width="1.800"/></svg>
<div class="a" style="left:1130px;top:739px;width:15px;height:15px;border-radius:50%;background:#1c2f9e;border:1px solid #c9d4e4;color:#fff;font-weight:bold;font-size:11px;line-height:15px;text-align:center">?</div>
<div class="a" style="left:1155px;top:739px;width:7px;height:5px;border:1px solid #fff"></div>
<div class="a" style="left:1155px;top:751px;width:0;height:0;border-left:4px solid transparent;border-right:4px solid transparent;border-top:4px solid #fff"></div>
<div class="a" style="left:1179px;top:748px;width:0;height:0;border-left:4px solid transparent;border-right:4px solid transparent;border-bottom:4px solid #fff"></div>
<svg class="i" style="left:1200px;top:740px" width="16" height="16"><path d="M1 1v14" stroke="#fff" stroke-width="1.500"/><path fill="#fff" d="M2 1h10v9H2z"/><circle cx="11" cy="11" r="4" fill="#d9463b"/></svg>
<svg class="i" style="left:1224px;top:741px" width="15" height="16"><rect x="2" y="1" width="10" height="13" fill="#fff"/><path d="M2 6l10 9M12 6 2 15" stroke="#e02020" stroke-width="2"/></svg>
<svg class="i" style="left:1248px;top:741px" width="17" height="14"><path fill="#2b3a4c" d="M0 11h3v3H0zM4 9h3v5H4zM8 6h3v8H8zM12 3h3v11h-3z"/><circle cx="10" cy="9" r="4" fill="#f2b233"/></svg>
<div class="t" style="left:1297px;top:731px;font-size:11.700px;color:#fff">19:27</div>
<div class="t" style="left:1282px;top:748px;font-size:11.700px;color:#fff">03/02/2020</div>
<div class="a" style="left:1353px;top:729px;width:13px;height:39px;box-sizing:border-box;border:1px solid rgba(255,255,255,.4);background:rgba(255,255,255,.12)"></div>
</body>
</html>
